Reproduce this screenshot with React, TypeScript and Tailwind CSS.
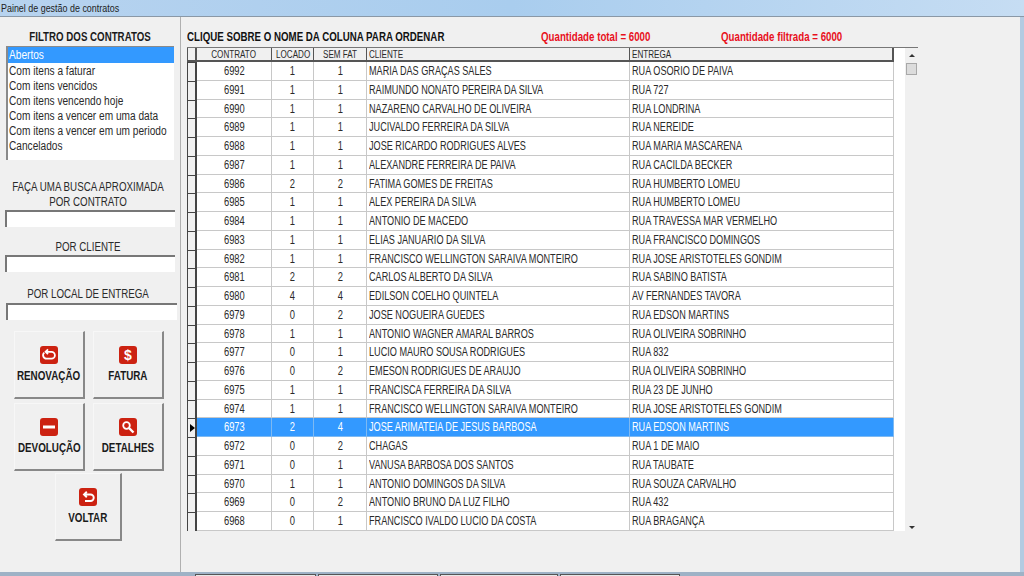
import { ReactNode } from "react";

type Row = [number, number, number, string, string];

const rows: Row[] = [
  [6992, 1, 1, "MARIA DAS GRAÇAS SALES", "RUA OSORIO DE PAIVA"],
  [6991, 1, 1, "RAIMUNDO NONATO PEREIRA DA SILVA", "RUA 727"],
  [6990, 1, 1, "NAZARENO CARVALHO DE OLIVEIRA", "RUA LONDRINA"],
  [6989, 1, 1, "JUCIVALDO FERREIRA DA SILVA", "RUA NEREIDE"],
  [6988, 1, 1, "JOSE RICARDO RODRIGUES ALVES", "RUA MARIA MASCARENA"],
  [6987, 1, 1, "ALEXANDRE FERREIRA DE PAIVA", "RUA CACILDA BECKER"],
  [6986, 2, 2, "FATIMA GOMES DE FREITAS", "RUA HUMBERTO LOMEU"],
  [6985, 1, 1, "ALEX PEREIRA DA SILVA", "RUA HUMBERTO LOMEU"],
  [6984, 1, 1, "ANTONIO DE MACEDO", "RUA TRAVESSA MAR VERMELHO"],
  [6983, 1, 1, "ELIAS JANUARIO DA SILVA", "RUA FRANCISCO DOMINGOS"],
  [6982, 1, 1, "FRANCISCO WELLINGTON SARAIVA MONTEIRO", "RUA JOSE ARISTOTELES GONDIM"],
  [6981, 2, 2, "CARLOS ALBERTO DA SILVA", "RUA SABINO BATISTA"],
  [6980, 4, 4, "EDILSON COELHO QUINTELA", "AV FERNANDES TAVORA"],
  [6979, 0, 2, "JOSE NOGUEIRA GUEDES", "RUA EDSON MARTINS"],
  [6978, 1, 1, "ANTONIO WAGNER AMARAL BARROS", "RUA OLIVEIRA SOBRINHO"],
  [6977, 0, 1, "LUCIO MAURO SOUSA RODRIGUES", "RUA 832"],
  [6976, 0, 2, "EMESON RODRIGUES DE ARAUJO", "RUA OLIVEIRA SOBRINHO"],
  [6975, 1, 1, "FRANCISCA FERREIRA DA SILVA", "RUA 23 DE JUNHO"],
  [6974, 1, 1, "FRANCISCO WELLINGTON SARAIVA MONTEIRO", "RUA JOSE ARISTOTELES GONDIM"],
  [6973, 2, 4, "JOSE ARIMATEIA DE JESUS BARBOSA", "RUA EDSON MARTINS"],
  [6972, 0, 2, "CHAGAS", "RUA 1 DE MAIO"],
  [6971, 0, 1, "VANUSA BARBOSA DOS SANTOS", "RUA TAUBATE"],
  [6970, 1, 1, "ANTONIO DOMINGOS DA SILVA", "RUA SOUZA CARVALHO"],
  [6969, 0, 2, "ANTONIO BRUNO DA LUZ FILHO", "RUA 432"],
  [6968, 0, 1, "FRANCISCO IVALDO LUCIO DA COSTA", "RUA BRAGANÇA"],
];

const filters = [
  "Abertos",
  "Com itens a faturar",
  "Com itens vencidos",
  "Com itens vencendo hoje",
  "Com itens a vencer em uma data",
  "Com itens a vencer em um periodo",
  "Cancelados",
];

// the capture is squeezed horizontally, so the text is narrowed to match
const narrowLeft = "inline-block origin-left scale-x-[.81] whitespace-nowrap";
const narrowCenter = "whitespace-nowrap scale-x-[.81]";
const searchLabel = "-ml-[12px] -mr-[8px] whitespace-nowrap scale-x-[.78] text-center leading-[15px]";
const cellLeft = "inline-block origin-left scale-x-[.76] whitespace-nowrap";
const cellCenter = "scale-x-[.78] whitespace-nowrap";

function SearchField({ className }: { className: string }) {
  return <div className={`h-[17px] border-l-2 border-t-2 border-[#777] bg-white ${className}`} />;
}

function ActionButton({ label, icon, className }: { label: string; icon: ReactNode; className: string }) {
  return (
    <div className={`flex h-[68px] flex-col items-center border border-b-2 border-r-2 border-[#f7f7f7] border-b-[#888] border-r-[#888] bg-[#f0f0f0] pt-[14px] ${className}`}>
      <svg viewBox="0 0 18 18" className="h-[18px] w-[18px]">
        <rect width="18" height="18" rx="3" fill="#cc2211" />
        {icon}
      </svg>
      <span className="mt-[4px] scale-x-[.82] whitespace-nowrap text-[12px] font-bold leading-[16px] text-[#1a1a1a]">{label}</span>
    </div>
  );
}

export default function App() {
  return (
    <div className="flex h-[576px] w-[1024px] flex-col overflow-hidden bg-[#f0f0f0] font-['Liberation_Sans',Arial,sans-serif] text-[#2a2a2a]">
      <div className="h-[16px] bg-gradient-to-r from-[#b7d3ef] via-[#a9cdee] to-[#c6ddf3] pl-[1px] text-[10.5px] leading-[16px] text-[#222]">
        <span className="inline-block origin-left scale-x-[.85] whitespace-nowrap">Painel de gestão de contratos</span>
      </div>
      <div className="h-[1px] bg-[#8a98a6]" />

      <div className="flex min-h-0 flex-1 border-r-[4px] border-[#b4cbe2]">
        <aside className="w-[181px] shrink-0 border-r border-[#b0b0b0] text-[12.5px]">
          <h2 className={`mt-[13px] text-center text-[12px] font-bold leading-[14px] text-[#1a1a1a] ${narrowCenter}`}>FILTRO DOS CONTRATOS</h2>
          <ul className="ml-[6px] mt-[2px] h-[114px] w-[168px] border-l-2 border-t border-[#8a8a8a] bg-white">
            {filters.map((filter, i) => (
              <li key={filter} className={`pl-[1px] ${i === 0 ? "h-[16px] bg-[#3399ff] leading-[17px] text-white" : "h-[15px] leading-[16px]"}`}>
                <span className={narrowLeft}>{filter}</span>
              </li>
            ))}
          </ul>

          <p className={`mt-[20px] ${searchLabel}`}>
            FAÇA UMA BUSCA APROXIMADA
            <br />
            POR CONTRATO
          </p>
          <SearchField className="ml-[5px] w-[170px]" />
          <p className={`mt-[13px] ${searchLabel}`}>POR CLIENTE</p>
          <SearchField className="ml-[5px] w-[170px]" />
          <p className={`mt-[15px] ${searchLabel}`}>POR LOCAL DE ENTREGA</p>
          <SearchField className="ml-[6px] mt-[1px] w-[171px]" />

          <div className="ml-[14px] mt-[11px] grid w-[150px] grid-cols-[71px_71px] gap-x-[8px] gap-y-[4px]">
            <ActionButton
              label="RENOVAÇÃO"
              icon={<path d="M6 5.8 H11.5 a3.4 3.4 0 0 1 0 6.8 H6.5 a3.4 3.4 0 0 1 -2.2 -6 M8 3.4 L5.6 5.8 L8 8.2" fill="none" stroke="#fff" strokeWidth="1.8" />}
              className=""
            />
            <ActionButton
              label="FATURA"
              icon={<text x="9" y="14" textAnchor="middle" fontSize="14" fontWeight="700" fill="#fff">$</text>}
              className=""
            />
            <ActionButton label="DEVOLUÇÃO" icon={<rect x="3" y="7.5" width="12" height="3" fill="#fff" />} className="" />
            <ActionButton
              label="DETALHES"
              icon={
                <>
                  <circle cx="7.5" cy="7.5" r="3.3" fill="none" stroke="#fff" strokeWidth="1.8" />
                  <path d="M10 10 L14.5 14.5" stroke="#fff" strokeWidth="2.4" />
                </>
              }
              className=""
            />
          </div>
          <ActionButton
            label="VOLTAR"
            icon={<path d="M5 6.5 H11.5 a3.2 3.2 0 0 1 0 6.5 H6 M7.8 3.8 L5 6.5 L7.8 9.2" fill="none" stroke="#fff" strokeWidth="1.9" />}
            className="ml-[55px] mt-[2px] w-[67px]"
          />
        </aside>

        <main className="min-w-0 flex-1 pl-[6px]">
          <div className="flex h-[30px] items-end pb-[3px] text-[12px] font-bold leading-[14px]">
            <span className="w-[354px] text-[#111]">
              <span className={narrowLeft}>CLIQUE SOBRE O NOME DA COLUNA PARA ORDENAR</span>
            </span>
            <span className="w-[180px] text-[#e8101c]">
              <span className={narrowLeft}>Quantidade total = 6000</span>
            </span>
            <span className="text-[#e8101c]">
              <span className={narrowLeft}>Quantidade filtrada = 6000</span>
            </span>
          </div>

          <div className="flex h-[484px] w-[731px] items-start border-t border-[#777]">
            <div className="w-[707px] bg-white">
              <div className="flex h-[14px] border-b-2 border-[#555] bg-[#f0f0f0] text-[10px] leading-[13px]">
                <div className="w-[10px] border-l border-r-2 border-[#555]" />
                <div className="w-[75px] border-r border-[#555] text-center">
                  <span className={`inline-block ${narrowCenter}`}>CONTRATO</span>
                </div>
                <div className="w-[42px] border-r border-[#555] text-center">
                  <span className={`inline-block ${narrowCenter}`}>LOCADO</span>
                </div>
                <div className="w-[53px] border-r border-[#555] text-center">
                  <span className={`inline-block ${narrowCenter}`}>SEM FAT</span>
                </div>
                <div className="w-[263px] border-r border-[#555] pl-[2px]">
                  <span className={narrowLeft}>CLIENTE</span>
                </div>
                <div className="flex-1 border-r-2 border-[#555] pl-[2px]">
                  <span className={narrowLeft}>ENTREGA</span>
                </div>
              </div>
              {rows.map((row) => {
                const selected = row[0] === 6973;
                const cell = selected ? "border-[#7db9f2]" : "border-[#c8c8c8]";
                return (
                  <div key={row[0]} className={`flex h-[18.75px] text-[12px] leading-[18px] ${selected ? "bg-[#3399ff] text-white" : ""}`}>
                    <div className="flex w-[10px] items-center border-l border-r-2 border-t border-[#444] bg-[#f0f0f0] text-black">
                      {selected && <div className="ml-[2px] h-0 w-0 border-y-[4px] border-l-[5px] border-y-transparent border-l-black" />}
                    </div>
                    <div className={`w-[75px] border-b border-r text-center ${cell}`}>
                      <span className={`inline-block ${cellCenter}`}>{row[0]}</span>
                    </div>
                    <div className={`w-[42px] border-b border-r text-center ${cell}`}>
                      <span className={`inline-block ${cellCenter}`}>{row[1]}</span>
                    </div>
                    <div className={`w-[53px] border-b border-r text-center ${cell}`}>
                      <span className={`inline-block ${cellCenter}`}>{row[2]}</span>
                    </div>
                    <div className={`w-[263px] whitespace-nowrap border-b border-r pl-[2px] ${cell}`}>
                      <span className={cellLeft}>{row[3]}</span>
                    </div>
                    <div className={`flex-1 whitespace-nowrap border-b border-r pl-[2px] ${cell}`}>
                      <span className={cellLeft}>{row[4]}</span>
                    </div>
                  </div>
                );
              })}
            </div>
            <div className="h-full w-[11px] bg-white" />
            <div className="relative flex h-full w-[13px] flex-col items-center bg-[#f0f0f0]">
              <div className="mt-[6px] h-0 w-0 border-x-[3px] border-b-[3px] border-x-transparent border-b-[#333]" />
              <div className="mt-[6px] h-[12px] w-[11px] border border-[#a8a8a8] bg-[#dcdcdc]" />
              <div className="absolute bottom-[2px] h-0 w-0 border-x-[3px] border-t-[3px] border-x-transparent border-t-[#333]" />
            </div>
          </div>
        </main>
      </div>

      <div className="flex h-[4px] bg-[#9eb2c6] pl-[195px]">
        <div className="mt-[2px] h-[2px] w-[121px] border-x border-t border-[#555] bg-[#e8e8e8]" />
        <div className="ml-[2px] mt-[2px] h-[2px] w-[120px] border-x border-t border-[#555] bg-[#e8e8e8]" />
        <div className="ml-[2px] mt-[2px] h-[2px] w-[118px] border-x border-t border-[#555] bg-[#e8e8e8]" />
        <div className="ml-[2px] mt-[2px] h-[2px] w-[120px] border-x border-t border-[#555] bg-[#e8e8e8]" />
      </div>
    </div>
  );
}
